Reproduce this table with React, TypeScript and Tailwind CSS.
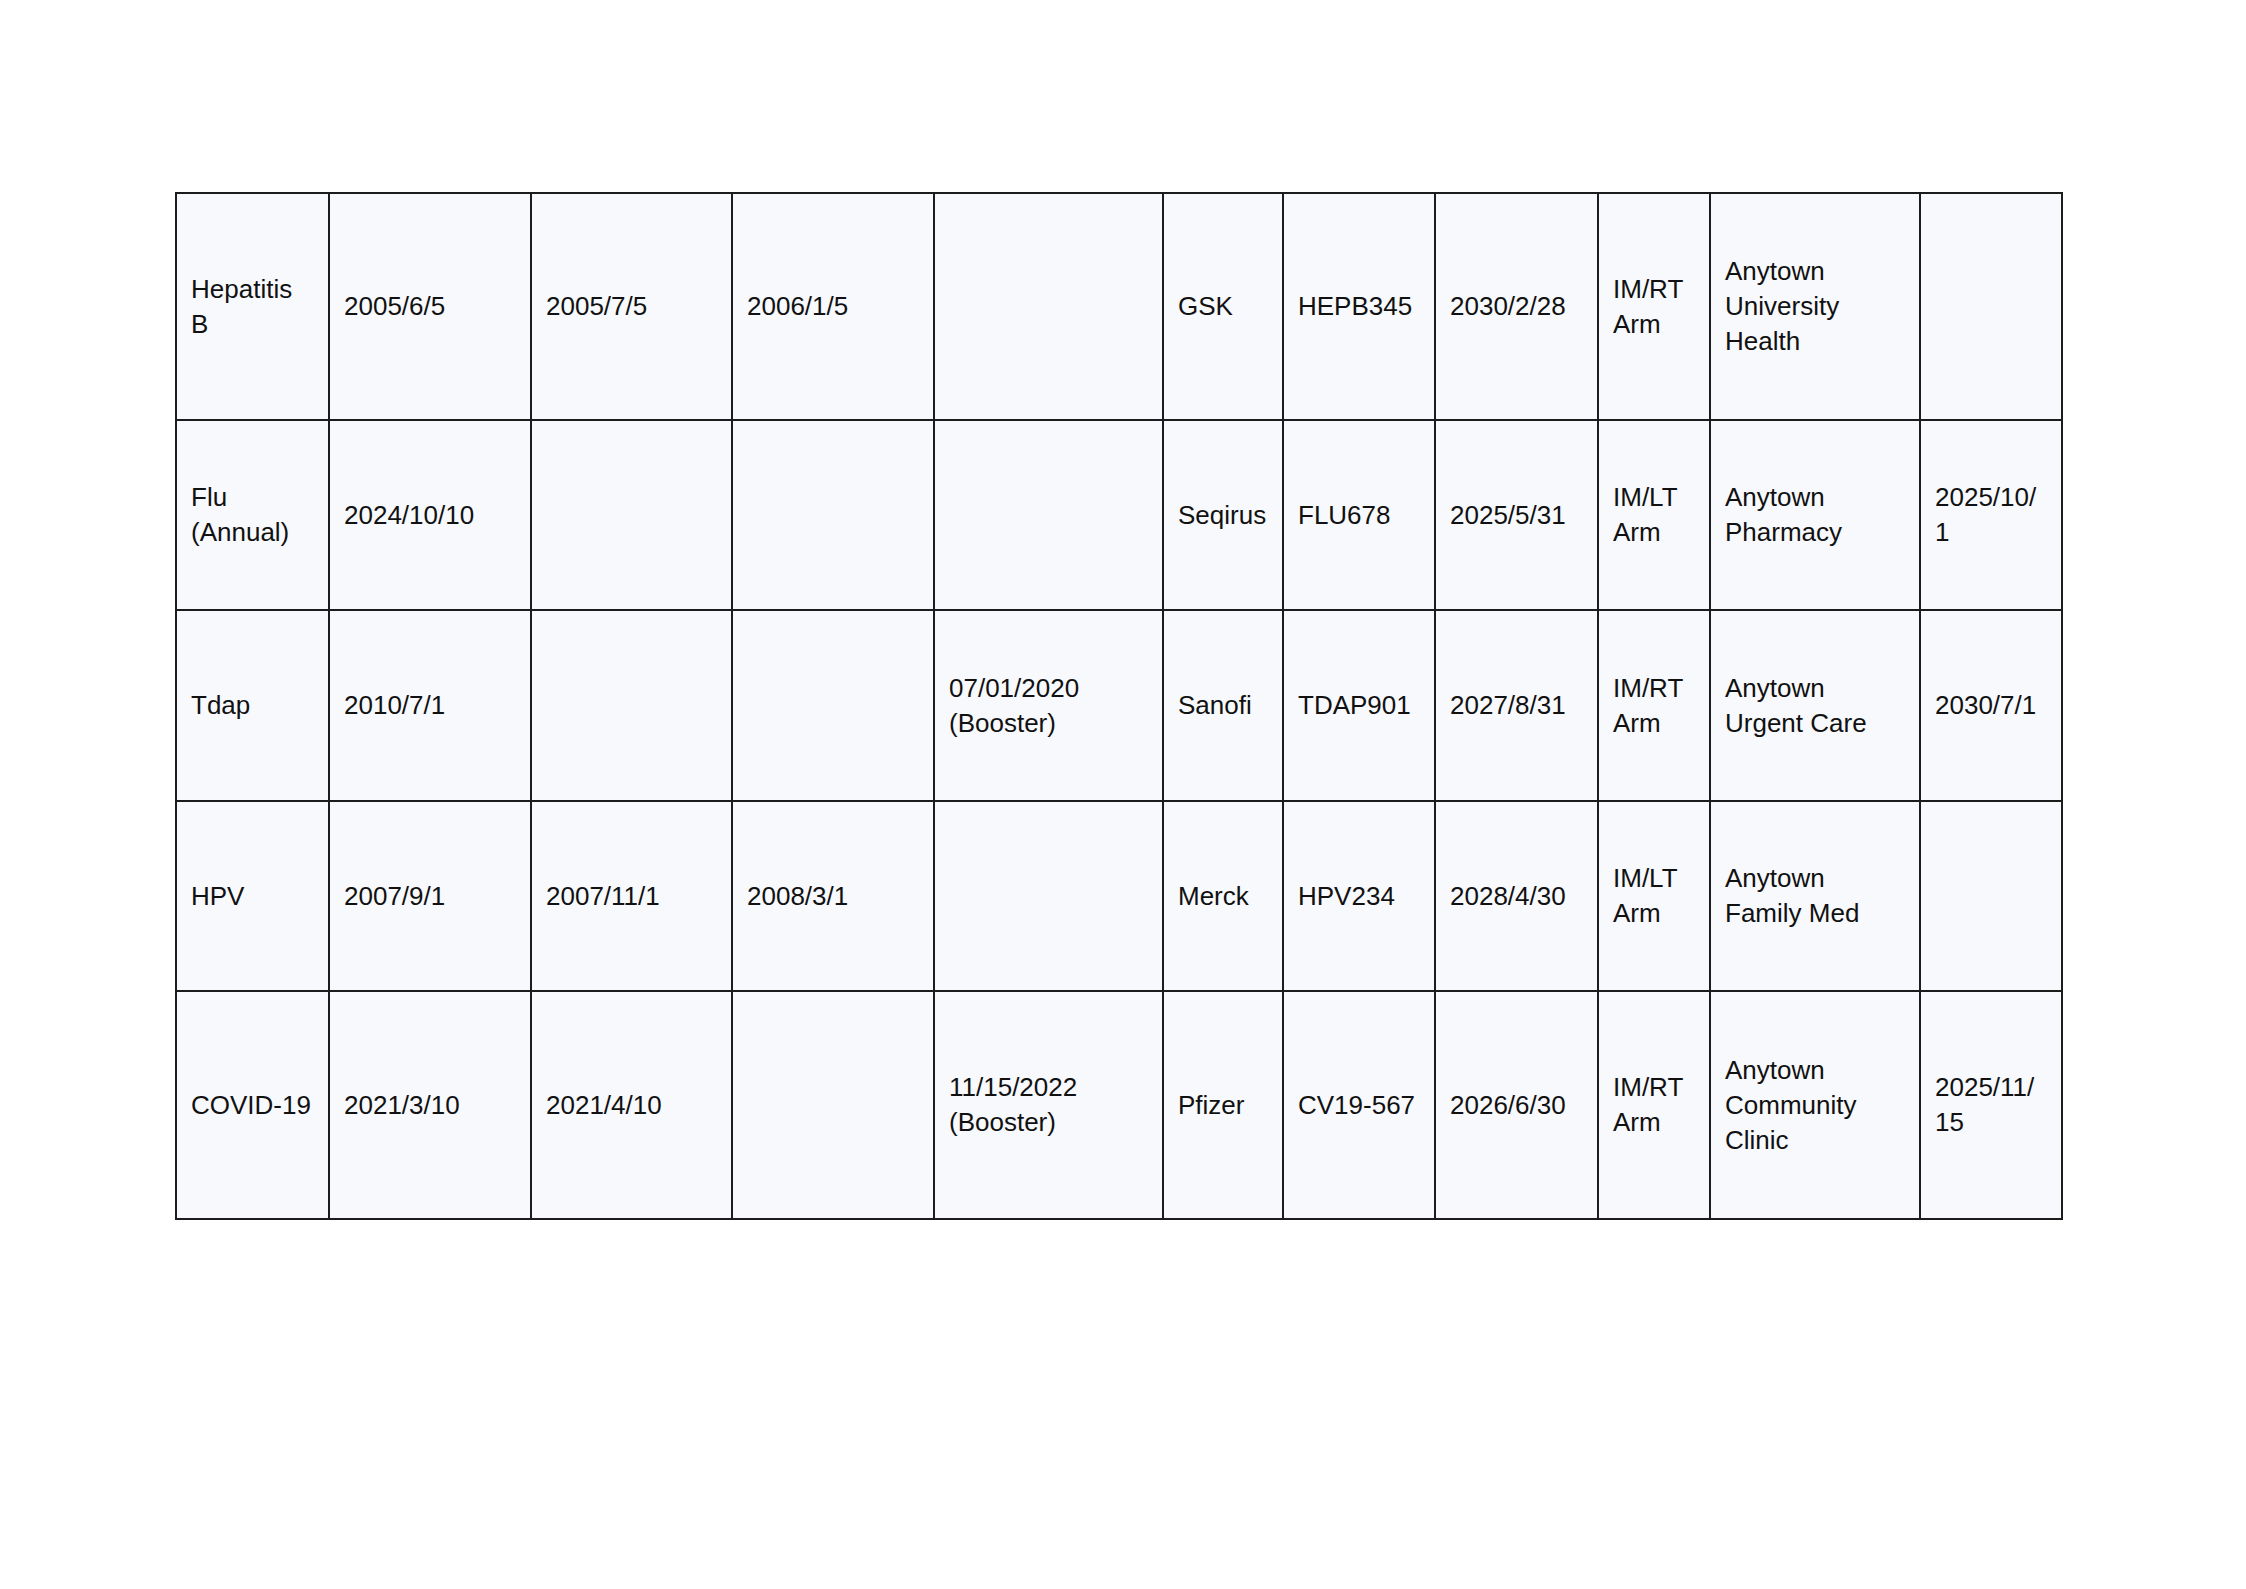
type Row = {
  vaccine: string;
  dose1: string;
  dose2: string;
  dose3: string;
  booster: string;
  maker: string;
  lot: string;
  expires: string;
  site: string;
  clinic: string;
  nextDue: string;
  height: string;
};

const rows: Row[] = [
  {
    vaccine: "Hepatitis B",
    dose1: "2005/6/5",
    dose2: "2005/7/5",
    dose3: "2006/1/5",
    booster: "",
    maker: "GSK",
    lot: "HEPB345",
    expires: "2030/2/28",
    site: "IM/RT Arm",
    clinic: "Anytown University Health",
    nextDue: "",
    height: "h-[227px]",
  },
  {
    vaccine: "Flu (Annual)",
    dose1: "2024/10/10",
    dose2: "",
    dose3: "",
    booster: "",
    maker: "Seqirus",
    lot: "FLU678",
    expires: "2025/5/31",
    site: "IM/LT Arm",
    clinic: "Anytown Pharmacy",
    nextDue: "2025/10/1",
    height: "h-[190px]",
  },
  {
    vaccine: "Tdap",
    dose1: "2010/7/1",
    dose2: "",
    dose3: "",
    booster: "07/01/2020 (Booster)",
    maker: "Sanofi",
    lot: "TDAP901",
    expires: "2027/8/31",
    site: "IM/RT Arm",
    clinic: "Anytown Urgent Care",
    nextDue: "2030/7/1",
    height: "h-[191px]",
  },
  {
    vaccine: "HPV",
    dose1: "2007/9/1",
    dose2: "2007/11/1",
    dose3: "2008/3/1",
    booster: "",
    maker: "Merck",
    lot: "HPV234",
    expires: "2028/4/30",
    site: "IM/LT Arm",
    clinic: "Anytown Family Med",
    nextDue: "",
    height: "h-[190px]",
  },
  {
    vaccine: "COVID-19",
    dose1: "2021/3/10",
    dose2: "2021/4/10",
    dose3: "",
    booster: "11/15/2022 (Booster)",
    maker: "Pfizer",
    lot: "CV19-567",
    expires: "2026/6/30",
    site: "IM/RT Arm",
    clinic: "Anytown Community Clinic",
    nextDue: "2025/11/15",
    height: "h-[228px]",
  },
];

function Cell({ children }: { children?: string }) {
  return (
    <td className="border-2 border-[#1c1c1c] px-[14px] py-0 align-middle [overflow-wrap:anywhere]">
      {children}
    </td>
  );
}

export default function App() {
  return (
    <div className="min-h-screen bg-white pl-[175px] pt-[192px] font-['Liberation_Sans',Arial,sans-serif] text-[26px] leading-[35px] text-[#111111]">
      <table className="w-[1888px] table-fixed border-collapse border-2 border-[#1c1c1c] bg-[#f8f9fd]">
        <colgroup>
          <col className="w-[153px]" />
          <col className="w-[202px]" />
          <col className="w-[201px]" />
          <col className="w-[202px]" />
          <col className="w-[229px]" />
          <col className="w-[120px]" />
          <col className="w-[152px]" />
          <col className="w-[163px]" />
          <col className="w-[112px]" />
          <col className="w-[210px]" />
          <col className="w-[142px]" />
        </colgroup>
        <tbody>
          {rows.map((r) => (
            <tr key={r.vaccine} className={r.height}>
              <Cell>{r.vaccine}</Cell>
              <Cell>{r.dose1}</Cell>
              <Cell>{r.dose2}</Cell>
              <Cell>{r.dose3}</Cell>
              <Cell>{r.booster}</Cell>
              <Cell>{r.maker}</Cell>
              <Cell>{r.lot}</Cell>
              <Cell>{r.expires}</Cell>
              <Cell>{r.site}</Cell>
              <Cell>{r.clinic}</Cell>
              <Cell>{r.nextDue}</Cell>
            </tr>
          ))}
        </tbody>
      </table>
    </div>
  );
}
